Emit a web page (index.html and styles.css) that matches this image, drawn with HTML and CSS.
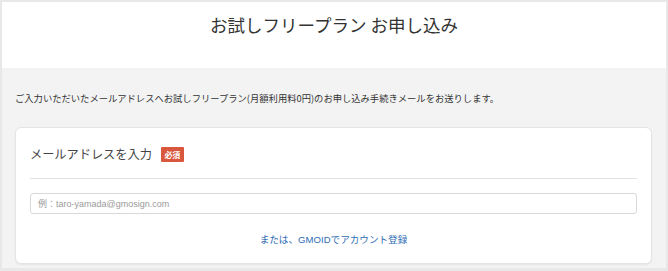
FILE: index.html
```html
<!DOCTYPE html>
<html lang="ja">
<head>
<meta charset="utf-8">
<link rel="stylesheet" href="styles.css">
</head>
<body>
<div class="frame">
  <header class="header">
    <h1 class="title">お試しフリープラン お申し込み</h1>
  </header>
  <main class="main">
    <p class="lead">ご入力いただいたメールアドレスへお試しフリープラン(月額利用料0円)のお申し込み手続きメールをお送りします。</p>
    <section class="card">
      <div class="label-row">
        <span class="label">メールアドレスを入力</span>
        <span class="badge">必須</span>
      </div>
      <div class="divider"></div>
      <input class="input" type="text" placeholder="例：taro-yamada@gmosign.com">
      <div class="link-row"><a class="link" href="#">または、GMOIDでアカウント登録</a></div>
    </section>
  </main>
</div>
</body>
</html>
```
FILE: styles.css
```css
* { box-sizing: border-box; }
html, body { margin: 0; padding: 0; }
body {
  font-family: "Noto Sans CJK JP", "Noto Sans", sans-serif;
  background: #f3f3f3;
  width: 668px;
  height: 271px;
  overflow: hidden;
}
.frame {
  border: 2px solid #e8e8e8;
  border-bottom-width: 3px;
  height: 271px;
  display: flex;
  flex-direction: column;
}
.header {
  background: #fff;
  height: 66px;
  padding-top: 10px;
}
.title {
  margin: 0;
  text-align: center;
  font-size: 17.5px;
  font-weight: 400;
  color: #333;
  line-height: 26px;
}
.main {
  flex: 1;
  background: #f3f3f3;
  padding: 0 14px 0 13px;
}
.lead {
  margin: 22px 0 0;
  font-size: 9.3px;
  line-height: 16px;
  color: #333;
}
.card {
  margin-top: 21px;
  background: #fff;
  border: 1px solid #e4e4e4;
  border-radius: 6px;
  box-shadow: 0 1px 2px rgba(0,0,0,0.06);
  padding: 15px 14px 16px;
  display: flex;
  flex-direction: column;
}
.label-row {
  display: flex;
  align-items: center;
  gap: 9px;
  height: 22px;
}
.label {
  font-size: 12.2px;
  color: #444;
}
.badge {
  background: #d9573d;
  color: #fff;
  font-size: 8px;
  font-weight: 700;
  width: 23px;
  height: 15px;
  display: flex;
  align-items: center;
  justify-content: center;
  border-radius: 1px;
}
.divider {
  margin-top: 13px;
  height: 1px;
  background: #e2e2e2;
}
.input {
  margin-top: 14px;
  height: 21px;
  width: 100%;
  border: 1px solid #d8d8d8;
  border-radius: 3px;
  padding: 0 7px;
  font-family: "Liberation Sans", "Noto Sans CJK JP", sans-serif;
  font-size: 9px;
  color: #333;
  background: #fff;
  outline: none;
}
.input::placeholder { color: #9a9a9a; }
.link-row {
  margin-top: 15px;
  text-align: center;
  line-height: 14px;
}
.link {
  font-family: "Liberation Sans", "Noto Sans CJK JP", sans-serif;
  font-size: 9.6px;
  color: #2f6db5;
  text-decoration: none;
}
```
